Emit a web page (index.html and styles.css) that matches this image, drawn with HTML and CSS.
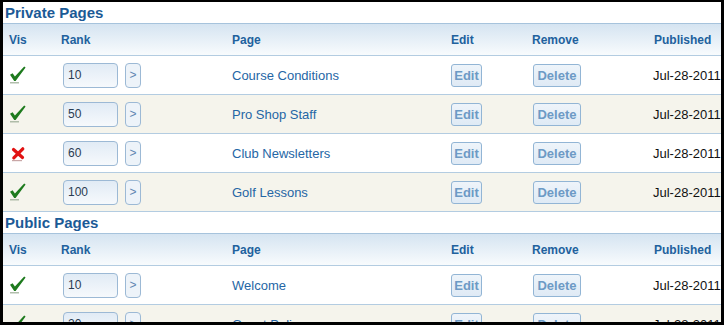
FILE: index.html
```html
<!DOCTYPE html>
<html>
<head>
<meta charset="utf-8">
<link rel="stylesheet" href="styles.css">
</head>
<body>
<div class="frame">
  <section class="group">
    <h2 class="group-title">Private Pages</h2>
    <div class="grid head">
      <div>Vis</div><div>Rank</div><div>Page</div><div>Edit</div><div>Remove</div><div class="pub">Published</div>
    </div>
    <div class="grid row">
      <div><svg class="ic" viewBox="0 0 18 18" width="18" height="18"><path d="M1 8.8 L3.6 7.3 L5.9 10.6 L15.2 0.6 L16.6 1.5 L6.6 15 L5.2 15 Z" fill="#1d7a1d"/><rect x="1" y="16.2" width="9" height="1.2" fill="#9fae98"/></svg></div>
      <div class="rank"><span class="rank-input">10</span><span class="go">&gt;</span></div>
      <div class="page">Course Conditions</div>
      <div><span class="btn edit">Edit</span></div>
      <div><span class="btn del">Delete</span></div>
      <div class="date">Jul-28-2011</div>
    </div>
    <div class="grid row alt">
      <div><svg class="ic" viewBox="0 0 18 18" width="18" height="18"><path d="M1 8.8 L3.6 7.3 L5.9 10.6 L15.2 0.6 L16.6 1.5 L6.6 15 L5.2 15 Z" fill="#1d7a1d"/><rect x="1" y="16.2" width="9" height="1.2" fill="#9fae98"/></svg></div>
      <div class="rank"><span class="rank-input">50</span><span class="go">&gt;</span></div>
      <div class="page">Pro Shop Staff</div>
      <div><span class="btn edit">Edit</span></div>
      <div><span class="btn del">Delete</span></div>
      <div class="date">Jul-28-2011</div>
    </div>
    <div class="grid row">
      <div><svg class="ic" viewBox="0 0 18 18" width="18" height="18"><path d="M4.5 5.5 L13.5 13.5 M13.8 4.8 L4.8 13.8" stroke="#e11212" stroke-width="3.2" stroke-linecap="round"/><rect x="3" y="16" width="10" height="1.2" fill="#c9a7a7"/></svg></div>
      <div class="rank"><span class="rank-input">60</span><span class="go">&gt;</span></div>
      <div class="page">Club Newsletters</div>
      <div><span class="btn edit">Edit</span></div>
      <div><span class="btn del">Delete</span></div>
      <div class="date">Jul-28-2011</div>
    </div>
    <div class="grid row alt">
      <div><svg class="ic" viewBox="0 0 18 18" width="18" height="18"><path d="M1 8.8 L3.6 7.3 L5.9 10.6 L15.2 0.6 L16.6 1.5 L6.6 15 L5.2 15 Z" fill="#1d7a1d"/><rect x="1" y="16.2" width="9" height="1.2" fill="#9fae98"/></svg></div>
      <div class="rank"><span class="rank-input">100</span><span class="go">&gt;</span></div>
      <div class="page">Golf Lessons</div>
      <div><span class="btn edit">Edit</span></div>
      <div><span class="btn del">Delete</span></div>
      <div class="date">Jul-28-2011</div>
    </div>
  </section>
  <section class="group">
    <h2 class="group-title">Public Pages</h2>
    <div class="grid head">
      <div>Vis</div><div>Rank</div><div>Page</div><div>Edit</div><div>Remove</div><div class="pub">Published</div>
    </div>
    <div class="grid row">
      <div><svg class="ic" viewBox="0 0 18 18" width="18" height="18"><path d="M1 8.8 L3.6 7.3 L5.9 10.6 L15.2 0.6 L16.6 1.5 L6.6 15 L5.2 15 Z" fill="#1d7a1d"/><rect x="1" y="16.2" width="9" height="1.2" fill="#9fae98"/></svg></div>
      <div class="rank"><span class="rank-input">10</span><span class="go">&gt;</span></div>
      <div class="page">Welcome</div>
      <div><span class="btn edit">Edit</span></div>
      <div><span class="btn del">Delete</span></div>
      <div class="date">Jul-28-2011</div>
    </div>
    <div class="grid row alt">
      <div><svg class="ic" viewBox="0 0 18 18" width="18" height="18"><path d="M1 8.8 L3.6 7.3 L5.9 10.6 L15.2 0.6 L16.6 1.5 L6.6 15 L5.2 15 Z" fill="#1d7a1d"/><rect x="1" y="16.2" width="9" height="1.2" fill="#9fae98"/></svg></div>
      <div class="rank"><span class="rank-input">20</span><span class="go">&gt;</span></div>
      <div class="page">Guest Policy</div>
      <div><span class="btn edit">Edit</span></div>
      <div><span class="btn del">Delete</span></div>
      <div class="date">Jul-28-2011</div>
    </div>
  </section>
</div>
</body>
</html>
```
FILE: styles.css
```css
html, body {
  margin: 0;
  padding: 0;
  background: #000;
  height: 325px;
  overflow: hidden;
}
body {
  font-family: "Liberation Sans", Arial, sans-serif;
}
.frame {
  margin: 2px 3px 0 3px;
  height: 320px;
  background: #fff;
  overflow: hidden;
}
.group-title {
  margin: 0;
  height: 21px;
  line-height: 21px;
  padding-left: 2px;
  font-size: 15px;
  font-weight: bold;
  color: #1b5a96;
  border-bottom: 1px solid #a6c3dc;
}
.grid {
  display: grid;
  grid-template-columns: 52px 171px 219px 81px 121px 1fr;
  align-items: center;
  padding-left: 6px;
  border-bottom: 1px solid #b3cce1;
  white-space: nowrap;
}
.head {
  height: 31px;
  background: linear-gradient(to bottom, #d5e4f1, #f8fbfd);
  font-size: 12px;
  font-weight: bold;
  color: #21619d;
}
.head .pub { margin-left: 1px; }
.row {
  height: 38px;
  background: #fff;
}
.row.alt {
  background: #f5f4ec;
}
.ic {
  display: block;
  margin-left: 0;
}
.rank {
  display: flex;
  align-items: center;
  gap: 7px;
  padding-left: 2px;
}
.rank-input {
  box-sizing: border-box;
  width: 55px;
  height: 25px;
  line-height: 23px;
  padding-left: 4px;
  border: 1px solid #9cb9d5;
  border-radius: 4px;
  background: linear-gradient(to bottom, #e1ebf5, #f6f9fc);
  font-size: 12px;
  color: #2a3c52;
}
.go {
  box-sizing: border-box;
  width: 16px;
  height: 25px;
  line-height: 23px;
  text-align: center;
  border: 1px solid #9cb9d5;
  border-radius: 4px;
  background: #edf3f9;
  font-size: 12px;
  color: #5f87b1;
}
.page {
  font-size: 13px;
  color: #2566a5;
}
.btn {
  display: block;
  box-sizing: border-box;
  height: 23px;
  line-height: 21px;
  text-align: center;
  border: 1px solid #92b5d5;
  border-radius: 3px;
  background: linear-gradient(to bottom, #eef4fa, #dfeaf5);
  font-size: 13px;
  font-weight: bold;
  color: #6d9ac5;
}
.btn.edit { width: 31px; }
.btn.del { width: 48px; margin-left: 1px; }
.date {
  font-size: 13px;
  color: #111;
}
```
